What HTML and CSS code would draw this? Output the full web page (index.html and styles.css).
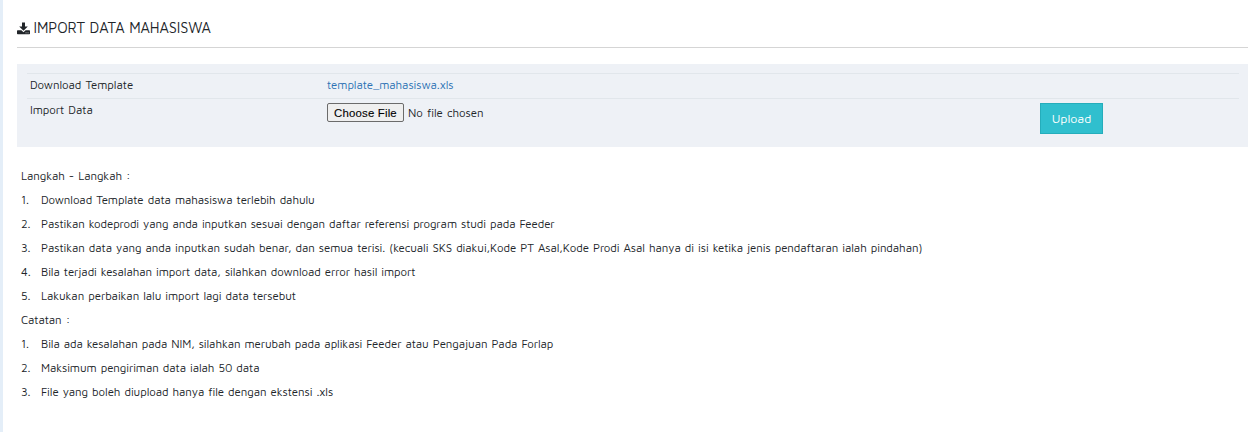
FILE: index.html
```
<!DOCTYPE html>
<html lang="id">
<head>
<meta charset="utf-8">
<title>Import Data Mahasiswa</title>
<link rel="stylesheet" href="styles.css">
</head>
<body>
<main class="page">
  <h1 class="title">
    <svg class="title-icon" viewBox="0 0 13 13" aria-hidden="true">
      <path fill="currentColor" d="M5 .5h3v4h2.800L6.500 8.800 2.200 4.500H5z"/>
      <path fill="currentColor" fill-rule="evenodd" d="M.7 8.300h3.700l2.100 2 2.100-2h3.700q.7 0 .7.700v2.500q0 .7-.7.700H.7q-.7 0-.7-.7V9q0-.7.700-.7zM8.600 10.400v.9h.9v-.9zM10.600 10.400v.9h.9v-.9z"/>
    </svg>
    <span>IMPORT DATA MAHASISWA</span>
  </h1>
  <section class="panel">
    <div class="row row-template">
      <div class="label">Download Template</div>
      <div><a class="link" href="#">template_mahasiswa.xls</a></div>
    </div>
    <div class="row row-import">
      <div class="label">Import Data</div>
      <div class="file"><button class="choose" type="button">Choose File</button><span class="nofile">No file chosen</span></div>
      <div><button class="upload" type="button">Upload</button></div>
    </div>
  </section>
  <section class="notes">
    <p class="heading">Langkah - Langkah :</p>
    <div class="item"><span>1.</span><span>Download Template data mahasiswa terlebih dahulu</span></div>
    <div class="item item-tight"><span>2.</span><span>Pastikan kodeprodi yang anda inputkan sesuai dengan daftar referensi program studi pada Feeder</span></div>
    <div class="item"><span>3.</span><span>Pastikan data yang anda inputkan sudah benar, dan semua terisi. (kecuali SKS diakui,Kode PT Asal,Kode Prodi Asal hanya di isi ketika jenis pendaftaran ialah pindahan)</span></div>
    <div class="item"><span>4.</span><span>Bila terjadi kesalahan import data, silahkan download error hasil import</span></div>
    <div class="item"><span>5.</span><span>Lakukan perbaikan lalu import lagi data tersebut</span></div>
    <p class="heading">Catatan :</p>
    <div class="item item-tight"><span>1.</span><span>Bila ada kesalahan pada NIM, silahkan merubah pada aplikasi Feeder atau Pengajuan Pada Forlap</span></div>
    <div class="item"><span>2.</span><span>Maksimum pengiriman data ialah 50 data</span></div>
    <div class="item"><span>3.</span><span>File yang boleh diupload hanya file dengan ekstensi .xls</span></div>
  </section>
</main>
</body>
</html>
```
FILE: styles.css
```
* { box-sizing: border-box; }
body {
  margin: 0;
  background: #fff;
  color: #212529;
  font-family: "Maven Pro", "Noto Sans", sans-serif;
  font-size: 11.5px;
  line-height: 24px;
  letter-spacing: -0.083px;
  word-spacing: 0.85px;
  white-space: nowrap;
}
.page {
  min-height: 432px;
  border-left: 3px solid #e4eef8;
  padding: 9px 8px 0 13px;
}
.title {
  display: flex;
  align-items: center;
  gap: 4px;
  height: 39px;
  margin: 0 0 16px 1px;
  border-bottom: 1px solid #d5d5d5;
  font-size: 14.6px;
  font-weight: 400;
  letter-spacing: -0.1px;
  word-spacing: 0.6px;
}
.title-icon { width: 13px; height: 13px; margin-left: -0.5px; }
.panel {
  height: 83px;
  margin-left: 1px;
  padding: 9px 9px 0 10px;
  background: #eef1f6;
}
.row {
  display: grid;
  grid-template-columns: 297px 713px 1fr;
  border-top: 1px solid #e1e6eb;
  padding: 0 3px;
  line-height: 22px;
}
.row-template { height: 25px; }
.label { letter-spacing: -0.05px; }
.link { color: #2c71b4; text-decoration: none; letter-spacing: -0.08px; }
.file { display: flex; align-items: center; height: 19px; margin-top: 4px; }
.choose {
  width: 77px;
  height: 19px;
  padding: 0;
  border: 1px solid #6b6b6b;
  border-radius: 2px;
  background: #efefef;
  color: #000;
  font: 11.4px/18px "Liberation Sans", sans-serif;
  letter-spacing: 0.18px;
  word-spacing: 0;
  -webkit-text-stroke: 0.1px #000;
}
.nofile { margin-left: 4px; letter-spacing: -0.04px; }
.upload {
  display: block;
  width: 63px;
  height: 31px;
  margin-top: 4px;
  padding: 0;
  border: 1px solid #25adbb;
  background: #30bfce;
  color: #fff;
  font: 450 12.5px/29px "Maven Pro", "Noto Sans", sans-serif;
  letter-spacing: -0.05px;
}
.notes { padding: 17px 0 0 5px; }
.heading { margin: 0; }
.item { display: grid; grid-template-columns: 20px auto; }
.item-tight { word-spacing: 0.75px; }
```
